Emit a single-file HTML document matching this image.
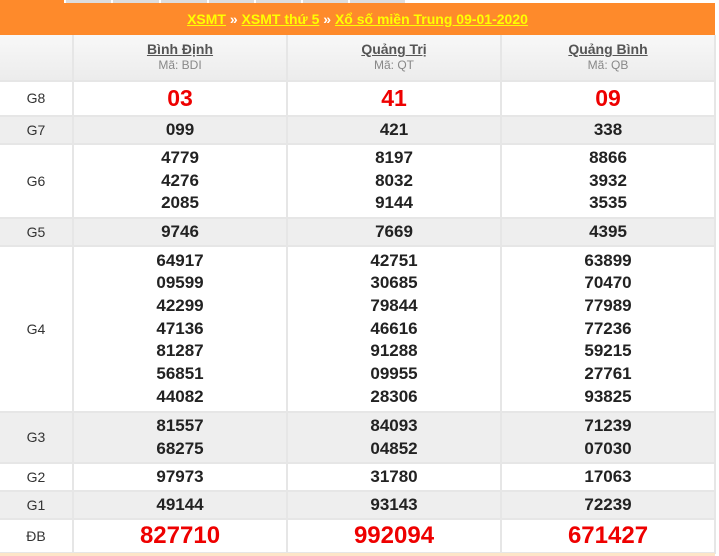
<!DOCTYPE html>
<html><head><meta charset="utf-8"><style>
*{margin:0;padding:0;box-sizing:border-box}
body{width:719px;height:556px;background:#fff;font-family:"Liberation Sans",Arial,sans-serif;position:relative;overflow:hidden}
.tabs{position:absolute;top:0;left:0;width:719px;height:3px;background:#fff}
.tabs div{position:absolute;top:0;height:3px;background:#ddd}
.top{position:absolute;top:3px;left:0;width:715px;height:32px;background:#fe8a2b;text-align:center;font-weight:bold;font-size:14px;line-height:32px;color:#fff}
.top a{color:#ff0;text-decoration:underline}
table{position:absolute;top:35px;left:0;width:715px;border-collapse:collapse;table-layout:fixed}
td{border:2px solid #e6e6e6;text-align:center;vertical-align:middle;color:#222;font-weight:bold;font-size:17px;line-height:22.7px}
tr.h td{background:linear-gradient(#f8f8f8,#ececec);height:46px;font-weight:normal;font-size:13px;line-height:15px;color:#555;border-top:none}
tr.h a{color:#555;text-decoration:underline;font-size:14px;font-weight:bold}
tr.h span{color:#888;font-size:12px}
td.l{font-weight:normal;font-size:14px;color:#333;border-left:none}
tr.g td{background:#eee}
.r{color:#e00;font-size:23px}
.db{color:#e00;font-size:24px}
.bot{position:absolute;top:553px;left:0;width:715px;height:3px;background:#fde5c8}
</style></head><body>
<div class="tabs"><div style="left:0;width:64px;background:#fe8a2b"></div><div style="left:66px;width:45px"></div><div style="left:113px;width:46px"></div><div style="left:161px;width:46px"></div><div style="left:209px;width:45px"></div><div style="left:256px;width:45px"></div><div style="left:303px;width:45px"></div><div style="left:350px;width:55px"></div></div>
<div class="top"><a>XSMT</a> » <a>XSMT thứ 5</a> » <a>Xổ số miền Trung 09-01-2020</a></div>
<table>
<colgroup><col style="width:73px"><col style="width:214px"><col style="width:214px"><col style="width:214px"></colgroup>
<tr class="h"><td class="l" style="background:linear-gradient(#f8f8f8,#ececec)"></td><td><a>Bình Định</a><br><span>Mã: BDI</span></td><td><a>Quảng Trị</a><br><span>Mã: QT</span></td><td><a>Quảng Bình</a><br><span>Mã: QB</span></td></tr>
<tr style="height:35px"><td class="l">G8</td><td class="r">03</td><td class="r">41</td><td class="r">09</td></tr>
<tr class="g" style="height:28px"><td class="l">G7</td><td>099</td><td>421</td><td>338</td></tr>
<tr style="height:74px"><td class="l">G6</td><td>4779<br>4276<br>2085</td><td>8197<br>8032<br>9144</td><td>8866<br>3932<br>3535</td></tr>
<tr class="g" style="height:28px"><td class="l">G5</td><td>9746</td><td>7669</td><td>4395</td></tr>
<tr style="height:166px"><td class="l">G4</td><td>64917<br>09599<br>42299<br>47136<br>81287<br>56851<br>44082</td><td>42751<br>30685<br>79844<br>46616<br>91288<br>09955<br>28306</td><td>63899<br>70470<br>77989<br>77236<br>59215<br>27761<br>93825</td></tr>
<tr class="g" style="height:51px"><td class="l">G3</td><td>81557<br>68275</td><td>84093<br>04852</td><td>71239<br>07030</td></tr>
<tr style="height:28px"><td class="l">G2</td><td>97973</td><td>31780</td><td>17063</td></tr>
<tr class="g" style="height:28px"><td class="l">G1</td><td>49144</td><td>93143</td><td>72239</td></tr>
<tr style="height:34px"><td class="l">ĐB</td><td class="db">827710</td><td class="db">992094</td><td class="db">671427</td></tr>
</table>
<div class="bot"></div>
</body></html>
